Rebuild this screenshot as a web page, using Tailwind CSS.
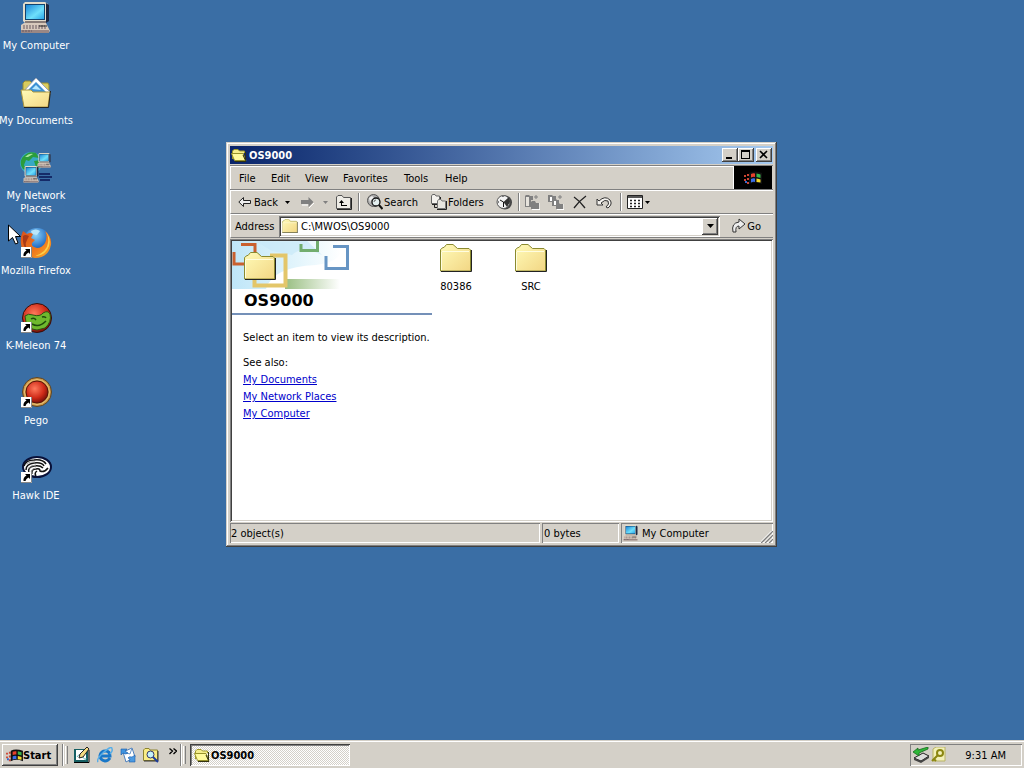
<!DOCTYPE html>
<html lang="en">
<head>
  <meta charset="UTF-8" />
  <meta name="viewport" content="width=device-width, initial-scale=1.0"/>
  <title>Desktop - OS9000</title>
  <script src="https://cdn.jsdelivr.net/npm/@tailwindcss/browser@4"></script>
</head>
<body class="bg-[#3a6ea5] h-screen flex flex-col relative overflow-hidden font-['DejaVu_Sans_Condensed','DejaVu_Sans',sans-serif] text-[11px] leading-[13px] text-black">

  <!-- SHARED ICONS -->
  <svg class="absolute size-0">
    <defs>
      <linearGradient id="screen" x1="0" y1="0" x2="1" y2="1">
        <stop offset="0" stop-color="#1c86d8"/><stop offset=".6" stop-color="#6fe0fb"/><stop offset="1" stop-color="#2aa5e8"/>
      </linearGradient>
      <linearGradient id="paper" x1="0" y1="0" x2="1" y2="1">
        <stop offset="0" stop-color="#fffbb8"/><stop offset="1" stop-color="#f2d684"/>
      </linearGradient>
      <linearGradient id="sky" x1="0" y1="0" x2="1" y2="0">
        <stop offset="0" stop-color="#bfe6f8"/><stop offset=".6" stop-color="#e3f5fc"/><stop offset="1" stop-color="#fff"/>
      </linearGradient>
      <linearGradient id="grass" x1="0" y1="0" x2="1" y2="0">
        <stop offset="0" stop-color="#7fae62"/><stop offset="1" stop-color="#fff"/>
      </linearGradient>
      <radialGradient id="redball" cx=".4" cy=".35" r=".7">
        <stop offset="0" stop-color="#ff7a5c"/><stop offset=".6" stop-color="#cf2a18"/><stop offset="1" stop-color="#6d0d08"/>
      </radialGradient>
      <radialGradient id="globe" cx=".45" cy=".25" r=".7">
        <stop offset="0" stop-color="#8fd4f8"/><stop offset=".6" stop-color="#2873c8"/><stop offset="1" stop-color="#123a80"/>
      </radialGradient>
      <linearGradient id="flame" x1="0" y1="0" x2="1" y2="1">
        <stop offset="0" stop-color="#d8501c"/><stop offset=".6" stop-color="#f07a1c"/><stop offset="1" stop-color="#f8b02c"/>
      </linearGradient>
      <symbol id="computer" viewBox="0 0 32 32">
        <path d="M3 2 5 0H25l3 2V19l-3 2H5L3 19Z" fill="#e3dccb"/>
        <path d="M26 1l3 2V19l-3 2Z" fill="#1d2740"/>
        <path d="M5 2H25V18H5Z" fill="#12436f"/>
        <path d="M6 3H24V17H6Z" fill="url(#screen)"/>
        <path d="M5 19H26V21H5Z" fill="#887c77"/>
        <path d="M1 23 4 21H26L30 29 28 31H1Z" fill="#d8cabc"/>
        <path d="M1 28H29V31H1Z" fill="#9a8784"/>
        <path d="M3 24H25M3 26H26M2 29H12" stroke="#685860" stroke-dasharray="2 1"/>
        <path d="M19 24H27" stroke="#222"/>
      </symbol>
      <symbol id="folder" viewBox="0 0 32 28">
        <path d="M.5 27V5.500L3 3.500H4L6.500.5H13L17.500 4.500H29L30.500 6V27Z" fill="url(#paper)" stroke="#8a8a30"/>
        <path d="M1.500 8V26M2 7.500H29" stroke="#fffde0" fill="none"/>
        <path d="M31.500 6V27.500H1" stroke="#222" fill="none"/>
      </symbol>
      <symbol id="open" viewBox="0 0 16 16">
        <path d="M1.500 12V4L3 2.500H7L8.500 4H13.500V6" fill="#f5ee8c" stroke="#a09a28"/>
        <path d="M.5 6.500H12L15 13.500H3.500Z" fill="#fffb9c" stroke="#96912a"/>
        <path d="M14.500 5V13.500L12 8M4 14.500H15" stroke="#333310" fill="none"/>
      </symbol>
      <symbol id="shortcut" viewBox="0 0 11 11">
        <path d="M0 0H11V11H0Z" fill="#fff"/>
        <path d="M10.500 0V10.500H0" stroke="#888" fill="none"/>
        <path d="M4 2H9V7L7.500 5.500Q5 6.500 4.500 9H2.500Q2 5 5.500 3.500Z" fill="#000"/>
      </symbol>
      <symbol id="flag" viewBox="0 0 18 16">
        <path d="M0 5h2v2H0ZM0 9h2v2H0ZM3 4h2v2H3ZM3 8h2v2H3ZM3 12h2v2H3Z" fill="#c43"/>
        <path d="M1 11h2v2H1Z" fill="#36c"/>
        <path d="M5 3Q10 0 18 3V14Q11 11 5 14Z" fill="#101010"/>
        <path d="M7 4Q9 3 11 3.500V7Q9 6.500 7 7.500Z" fill="#e8402c"/>
        <path d="M12.500 3.500Q15 4 16.500 4.500V8Q15 7.500 12.500 7Z" fill="#3ab54a"/>
        <path d="M7 9Q9 8 11 8.500V12Q9 11.500 7 12.500Z" fill="#3a6ee8"/>
        <path d="M12.500 8.500Q15 9 16.500 9.500V12.500Q15 12 12.500 12Z" fill="#f5d82c"/>
      </symbol>
    </defs>
  </svg>

  <!-- DESKTOP -->
  <main class="flex-1">
    <div class="w-[72px] flex flex-col text-white">
      <button class="h-[75px] pt-[2px] flex flex-col items-center gap-[5px]">
        <svg class="size-8 shrink-0"><use href="#computer"/></svg>
        <span class="whitespace-nowrap">My Computer</span>
      </button>
      <button class="h-[75px] pt-[2px] flex flex-col items-center gap-[5px]">
        <svg class="size-8 shrink-0" viewBox="0 0 32 32">
          <path d="M3 16V6L5 4H10L12 6H28L29 8V25H5Z" fill="#d9cc5e" stroke="#958b35"/>
          <path d="M16 1 31 16 22 24 3 15Z" fill="#fff" stroke="#98a5b8"/>
          <path d="M16 5 26 15 10 15 8 13Z" fill="#3d91d4"/>
          <path d="M12 12 16 8 21 13Z" fill="#b6e8ff"/>
          <path d="M1 13H11L13 15H30L28 30H4Z" fill="url(#paper)" stroke="#ab9640"/>
          <path d="M30.500 14 28.500 30.500H4" stroke="#222" fill="none"/>
        </svg>
        <span class="whitespace-nowrap">My Documents</span>
      </button>
      <button class="h-[75px] pt-[2px] flex flex-col items-center gap-[5px]">
        <svg class="size-8 shrink-0" viewBox="0 0 32 32">
          <circle cx="11" cy="11" r="11" fill="#37a9c4"/>
          <path d="M2 6Q8-2 16 1L19 6 13 5 9 9 6 8 4 13 6 18 3 17Q-1 12 2 6ZM14 9 20 8 22 12 17 18Z" fill="#2b9d3c"/>
          <path d="M5 5Q9 1 13 2L8 5Z" fill="#a9e6a0"/>
          <path d="M19 22H30M19 25H32M20 28H30" stroke="#152a68" stroke-width="2"/>
          <svg x="17" y="1" width="15" height="15"><use href="#computer"/></svg>
          <svg x="3" y="14" width="17" height="17"><use href="#computer"/></svg>
        </svg>
        <span>My Network Places</span>
      </button>
      <button class="h-[75px] pt-[2px] flex flex-col items-center gap-[5px]">
        <svg class="size-8 shrink-0" viewBox="0 0 32 32">
          <circle cx="17" cy="15" r="14" fill="url(#globe)"/>
          <path d="M11 4Q16 1 20 4L17 8 12 7Z" fill="#b9e6fa"/>
          <path d="M3 4 7 7Q10 5 13 7L11 11 15 13 12 16Q11 20 17 21 22 21 25 16 28 9 25 4 32 9 31 18 28 31 15 31 2 29 1 17 0 10 3 4Z" fill="url(#flame)"/>
          <path d="M26 5Q33 14 27 23 23 29 15 29 27 25 28 16 29 10 26 5Z" fill="#fbd04a"/>
          <path d="M3 9Q5 7 9 9L7 13Q4 18 8 24 2 20 3 9Z" fill="#a83a18"/>
          <svg x="1" y="20" width="11" height="11"><use href="#shortcut"/></svg>
        </svg>
        <span class="whitespace-nowrap">Mozilla Firefox</span>
      </button>
      <button class="h-[75px] pt-[2px] flex flex-col items-center gap-[5px]">
        <svg class="size-8 shrink-0" viewBox="0 0 32 32">
          <circle cx="17" cy="16" r="14.500" fill="url(#redball)" stroke="#35100c"/>
          <path d="M5 14Q8 11 13 13 20 15 23 11 28 8 30 12 32 20 25 26L17 28Q8 27 6 20Z" fill="#6fb92e" stroke="#2c5412"/>
          <path d="M11 17Q14 15 16 18M22 15Q25 14 26 16M12 22Q19 26 26 19" stroke="#1e4a0c" stroke-width="1.500" fill="none"/>
          <svg x="1" y="20" width="11" height="11"><use href="#shortcut"/></svg>
        </svg>
        <span class="whitespace-nowrap">K-Meleon 74</span>
      </button>
      <button class="h-[75px] pt-[2px] flex flex-col items-center gap-[5px]">
        <svg class="size-8 shrink-0" viewBox="0 0 32 32">
          <circle cx="17" cy="15" r="14.500" fill="#c99444" stroke="#5a4426"/>
          <circle cx="17" cy="15" r="12.500" fill="none" stroke="#e8c478"/>
          <circle cx="17" cy="15" r="11" fill="url(#redball)" stroke="#571409"/>
          <svg x="1" y="20" width="11" height="11"><use href="#shortcut"/></svg>
        </svg>
        <span>Pego</span>
      </button>
      <button class="h-[75px] pt-[2px] flex flex-col items-center gap-[5px]">
        <svg class="size-8 shrink-0" viewBox="0 0 32 32">
          <ellipse cx="17" cy="15" rx="14" ry="10" fill="#fff" stroke="#081038" stroke-width="2"/>
          <path d="M4 14Q6 8 14 8 23 7 26 12M6 18Q6 12 14 11 22 10 24 14M9 21Q7 15 14 14 20 13 23 16M12 22Q11 17 16 17 20 16 20 19 24 21 28 16M16 24Q14 21 17 19" fill="none" stroke="#111" stroke-width="1.500"/>
          <path d="M6 12Q10 9 15 10M8 17Q11 13 16 13M11 20Q12 16 16 16" stroke="#9a9a9a" fill="none"/>
          <svg x="1" y="20" width="11" height="11"><use href="#shortcut"/></svg>
        </svg>
        <span class="whitespace-nowrap">Hawk IDE</span>
      </button>
    </div>
  </main>

  <!-- MOUSE POINTER -->
  <svg class="absolute left-2 top-[224px] w-[13px] h-[21px]" viewBox="0 0 13 21">
    <path d="M.5 1V17L4.500 13.500 7.500 20 10 19 7.500 12.500H12.500Z" fill="#fff" stroke="#000"/>
  </svg>

  <!-- EXPLORER WINDOW -->
  <section class="absolute left-[226px] top-[142px] w-[551px] p-1 bg-[#d4d0c8] flex flex-col shadow-[inset_-1px_-1px_#404040,inset_1px_1px_#d4d0c8,inset_-2px_-2px_#808080,inset_2px_2px_#fff]">

    <!-- title bar -->
    <header class="h-[18px] px-px flex items-center bg-linear-to-r from-[#0a246a] to-[#a6caf0]">
      <svg class="size-4"><use href="#open"/></svg>
      <h1 class="flex-1 pl-[2px] font-bold text-white">OS9000</h1>
      <button aria-label="Minimize" class="w-4 h-[14px] bg-[#d4d0c8] shadow-[inset_-1px_-1px_#404040,inset_1px_1px_#fff,inset_-2px_-2px_#808080]">
        <svg class="w-4 h-[14px]" viewBox="0 0 16 14"><path d="M4 9H10V11H4Z"/></svg>
      </button>
      <button aria-label="Maximize" class="w-4 h-[14px] bg-[#d4d0c8] shadow-[inset_-1px_-1px_#404040,inset_1px_1px_#fff,inset_-2px_-2px_#808080]">
        <svg class="w-4 h-[14px]" viewBox="0 0 16 14"><path d="M3 2H12V11H3ZM4 4V10H11V4Z" fill-rule="evenodd"/></svg>
      </button>
      <button aria-label="Close" class="ml-[2px] w-4 h-[14px] bg-[#d4d0c8] shadow-[inset_-1px_-1px_#404040,inset_1px_1px_#fff,inset_-2px_-2px_#808080]">
        <svg class="w-4 h-[14px]" viewBox="0 0 16 14"><path d="M4 3 11 10M11 3 4 10" stroke="#000" stroke-width="1.600"/></svg>
      </button>
    </header>

    <!-- menu -->
    <div class="mt-px h-[25px] flex border-y border-t-[#808080] border-b-[#808080]">
      <nav class="flex-1 flex items-center pl-2 border-l border-t border-white">
        <button class="w-8 text-left">File</button>
        <button class="w-[34px] text-left">Edit</button>
        <button class="w-[38px] text-left">View</button>
        <button class="w-[61px] text-left">Favorites</button>
        <button class="w-[41px] text-left">Tools</button>
        <button class="text-left">Help</button>
      </nav>
      <div class="w-[39px] mr-px border-l border-white bg-black flex items-center justify-center">
        <svg class="w-[18px] h-4"><use href="#flag"/></svg>
      </div>
    </div>

    <!-- toolbar -->
    <div class="h-6 pl-[7px] flex items-center border-t border-l border-white border-b border-b-[#808080]">
      <button class="w-[46px] flex items-center gap-[3px]">
        <svg class="w-[13px] h-3 shrink-0" viewBox="0 0 13 12"><path d="M.8 6 5.500 1.500V4.500H12.500V7.500H5.500V10.500Z" fill="#eee" stroke="#222"/></svg>
        Back
      </button>
      <button aria-label="Back history" class="w-[17px] pl-px"><svg class="w-[5px] h-[3px]" viewBox="0 0 5 3"><path d="M0 0H5L2.500 3Z"/></svg></button>
      <button aria-label="Forward" class="w-[22px]"><svg class="w-[13px] h-3" viewBox="0 0 13 12"><path d="M12.500 6 7.500 1V4H0V8H7.500V11Z" fill="#808080"/><path d="M1 9H7M8 12 13 7" stroke="#fff"/></svg></button>
      <button aria-label="Forward history" class="w-[13px]"><svg class="w-[5px] h-[3px]" viewBox="0 0 5 3"><path d="M0 0H5L2.500 3Z" fill="#808080"/></svg></button>
      <button aria-label="Up" class="w-[22px]">
        <svg class="size-4" viewBox="0 0 16 16"><path d="M.5 14.500V3L2 1.500H6L7.500 3.500H14.500V14.500Z" fill="#eeece6" stroke="#555"/><path d="M15.500 4V15.500H1" stroke="#222" fill="none"/><path d="M5.500 6 8 9H6V11H11V12H5V9H3Z"/></svg>
      </button>
      <div class="w-[2px] h-[18px] mr-[7px] border-l border-[#808080] bg-white"></div>
      <button class="w-16 flex items-center gap-px">
        <svg class="size-4 shrink-0" viewBox="0 0 16 16"><circle cx="6.500" cy="6.500" r="6" fill="#aaa" stroke="#555"/><path d="M2 4 5 2 7 4 4 6 3 9Z" fill="#eee"/><circle cx="9" cy="8" r="4" fill="#e5f0f0" stroke="#111" stroke-width="1.300"/><path d="M12 11 15.500 15" stroke="#111" stroke-width="2"/><path d="M7 8Q7 6 9 6" stroke="#666" fill="none"/></svg>
        Search
      </button>
      <button class="w-[65px] flex items-center gap-px">
        <svg class="size-4 shrink-0" viewBox="0 0 16 16"><path d="M.5 9.500V2L1.500.5H4L5 2H8.500V9.500Z" fill="#f4f2ee" stroke="#666"/><path d="M9.500 3V10.500H1" stroke="#222" fill="none"/><path d="M6.500 14.500V7L7.500 5.500H10L11 7H14.500V14.500Z" fill="#e8e6e0" stroke="#777"/><path d="M15.500 7V15.500H6M3.500 11V13.500H6" stroke="#222" fill="none"/></svg>
        Folders
      </button>
      <button aria-label="History" class="w-[22px]">
        <svg class="size-4" viewBox="0 0 16 16"><circle cx="9" cy="8.500" r="7" fill="#444"/><circle cx="7.500" cy="8" r="6.500" fill="#f2f2f2" stroke="#555"/><path d="M7.500 8 13 3 14 8 11 13Z" fill="#333"/><path d="M7.500 8 4 6M7.500 8V13M7 2V3M2 8H3" stroke="#111"/></svg>
      </button>
      <div class="w-[2px] h-[18px] mr-1 border-l border-[#808080] bg-white"></div>
      <button aria-label="Move To" class="w-6">
        <svg class="size-4" viewBox="0 0 16 16"><path d="M1 13V2L2 1H5L6 2H9V6H7V13Z" fill="#808080"/><path d="M2 3H5V12H2Z" fill="#e6e3dc"/><path d="M7 15V8L8 7H11L12 9H15V15Z" fill="#808080"/><path d="M8 15.500H16V9" stroke="#fff" fill="none"/><path d="M10 3H14M12 1V5" stroke="#808080"/></svg>
      </button>
      <button aria-label="Copy To" class="w-6">
        <svg class="size-4" viewBox="0 0 16 16"><path d="M0 8V1H4L5 2H8V8ZM4 12V5H8L9 6H11V12Z" fill="#808080"/><path d="M2 3H4V7H2ZM6 7H8V11H6Z" fill="#fff"/><path d="M8 15V9H11L12 10H15V15Z" fill="#808080"/><path d="M9 15.500H16V10" stroke="#fff" fill="none"/><path d="M10 3H14M12 1V5" stroke="#808080"/></svg>
      </button>
      <button aria-label="Delete" class="w-6">
        <svg class="size-4" viewBox="0 0 16 16"><path d="M2 3Q8 7 13 14M14 2Q7 7 2 14" stroke="#222" stroke-width="1.300" fill="none"/></svg>
      </button>
      <button aria-label="Undo" class="w-6">
        <svg class="size-4" viewBox="0 0 16 16"><path d="M1 5V11H7L5 9Q9 5 12 7 14 10 10 13L12 14Q17 10 14 6 9 1 3 7Z" fill="#f4f2ee" stroke="#333"/></svg>
      </button>
      <div class="w-[2px] h-[18px] mr-[5px] border-l border-[#808080] bg-white"></div>
      <button aria-label="Views" class="flex items-center gap-[2px]">
        <svg class="size-4" viewBox="0 0 16 16"><path d="M.5 1.500H15.500V14.500H.5Z" fill="#fff" stroke="#222"/><path d="M1 3H15" stroke="#555" stroke-width="2"/><path d="M3 6.500H14M3 9.500H14M3 12.500H14" stroke="#222" stroke-width="1.500" stroke-dasharray="2 2"/></svg>
        <svg class="w-[5px] h-[3px]" viewBox="0 0 5 3"><path d="M0 0H5L2.500 3Z"/></svg>
      </button>
    </div>

    <!-- address -->
    <div class="h-6 pl-1 pr-3 flex items-center border-t border-l border-white border-b border-b-[#808080]">
      <label for="address" class="w-11">Address</label>
      <div class="flex-1 h-[21px] p-[2px] flex items-center bg-white shadow-[inset_1px_1px_#808080,inset_-1px_-1px_#fff,inset_2px_2px_#404040,inset_-2px_-2px_#d4d0c8]">
        <svg class="mx-px w-4 h-[14px]"><use href="#folder"/></svg>
        <input id="address" type="text" value="C:\MWOS\OS9000" class="flex-1 pl-[2px] outline-none">
        <button aria-label="Show addresses" class="w-4 h-[17px] flex items-center justify-center bg-[#d4d0c8] shadow-[inset_-1px_-1px_#404040,inset_1px_1px_#fff,inset_-2px_-2px_#808080]">
          <svg class="w-[7px] h-1" viewBox="0 0 7 4"><path d="M0 0H7L3.500 4Z"/></svg>
        </button>
      </div>
      <button class="ml-[11px] flex items-center">
        <svg class="size-4" viewBox="0 0 16 16"><path d="M2 14Q0 5 8 4V1L14 6 8 11V8Q4 8 5 14Z" fill="#eee" stroke="#333"/></svg>
        Go
      </button>
    </div>

    <!-- folder view -->
    <div class="mt-px min-h-[283px] p-[2px] flex bg-white shadow-[inset_1px_1px_#808080,inset_-1px_-1px_#fff,inset_2px_2px_#404040,inset_-2px_-2px_#d4d0c8]">
      <aside class="w-[200px]">
        <svg class="w-[120px] h-12" viewBox="0 0 120 48">
          <path d="M0 0H108Q116 20 84 24 40 26 34 48H0Z" fill="url(#sky)"/>
          <path d="M25 1 75 0 90 14Q70 4 60 14L40 10Z" fill="#c7e8f8" opacity=".7"/>
          <path d="M53 38H108V48H53Z" fill="url(#grass)" opacity=".8"/>
          <path d="M2 11V23H14M9 3.500H23V14" stroke="#c9602f" stroke-width="3" fill="none"/>
          <path d="M69 3V9.500H85.500V0" stroke="#72ad6e" stroke-width="3" fill="none"/>
          <path d="M94 15V27.500H115.500V5.500H101" stroke="#6795c4" stroke-width="3" fill="none"/>
          <path d="M38 14.500H53.500V44.500H22.500V38" stroke="#e3c66a" stroke-width="4" fill="none"/>
          <svg x="12" y="11" width="32" height="28"><use href="#folder"/></svg>
        </svg>
        <h2 class="h-6 pl-3 font-bold font-['DejaVu_Sans',sans-serif] text-[16px] leading-6">OS9000</h2>
        <div class="h-[2px] bg-[#7490b8]"></div>
        <div class="pl-[11px] pt-[14px] flex flex-col items-start leading-[17px]">
          <p class="mb-2 whitespace-nowrap">Select an item to view its description.</p>
          <p>See also:</p>
          <a href="#documents" class="text-[#0000cc] underline">My Documents</a>
          <a href="#network" class="text-[#0000cc] underline">My Network Places</a>
          <a href="#computer" class="text-[#0000cc] underline">My Computer</a>
        </div>
      </aside>
      <div class="flex-1 pt-[3px] flex items-start gap-[27px]">
        <button class="w-12 flex flex-col items-center gap-2">
          <svg class="w-8 h-7"><use href="#folder"/></svg>
          80386
        </button>
        <button class="w-12 flex flex-col items-center gap-2">
          <svg class="w-8 h-7"><use href="#folder"/></svg>
          SRC
        </button>
      </div>
    </div>

    <!-- status bar -->
    <footer class="mt-px h-5 flex gap-[2px]">
      <div class="flex-1 pl-px flex items-center shadow-[inset_1px_1px_#808080,inset_-1px_-1px_#fff]">2 object(s)</div>
      <div class="w-[77px] pl-[2px] flex items-center shadow-[inset_1px_1px_#808080,inset_-1px_-1px_#fff]">0 bytes</div>
      <div class="w-[152px] pl-[2px] flex items-center gap-[3px] shadow-[inset_1px_1px_#808080,inset_-1px_-1px_#fff]">
        <svg class="size-4"><use href="#computer"/></svg>
        <span class="flex-1">My Computer</span>
        <svg class="size-3 self-end" viewBox="0 0 12 12"><path d="M0 12 12 0M4 12 12 4M8 12 12 8" stroke="#808080" stroke-width="1.500"/><path d="M-1.500 12 12-1.500M2.500 12 12 2.500M6.500 12 12 6.500" stroke="#fff"/></svg>
      </div>
    </footer>
  </section>

  <!-- TASKBAR -->
  <footer class="h-7 pt-1 pb-[2px] px-[2px] flex items-stretch bg-[#d4d0c8] shadow-[inset_0_1px_#d4d0c8,inset_0_2px_#fff]">
    <button class="w-14 pl-1 flex items-center font-bold shadow-[inset_-1px_-1px_#404040,inset_1px_1px_#fff,inset_-2px_-2px_#808080]">
      <svg class="w-[17px] h-[15px] shrink-0"><use href="#flag"/></svg>
      Start
    </button>
    <div class="ml-1 w-[2px] border-l border-[#808080] bg-white"></div>
    <div class="ml-px my-[2px] w-[3px] border-l border-white border-r border-r-[#808080]"></div>
    <nav class="ml-[6px] flex items-center gap-[7px]">
      <button aria-label="Show Desktop">
        <svg class="size-4 block" viewBox="0 0 16 16"><path d="M0 2H14V15H0Z" fill="#155e62"/><path d="M2 3H12V13H2Z" fill="#fff"/><path d="M3 10Q6 5 9 10T12 11" fill="none" stroke="#62b8b8"/><path d="M5 11 6 7 13 0 15 2 9 10Z" fill="#f5db82" stroke="#222"/><path d="M0 15.500H15V3" stroke="#000" fill="none"/></svg>
      </button>
      <button aria-label="Internet Explorer">
        <svg class="size-4 block" viewBox="0 0 16 16"><path d="M13 11Q11 14 8 14 3 13 3 8.500 4 4 8.500 4 13 4 13 9H4" fill="none" stroke="#1977c8" stroke-width="3"/><path d="M1 15Q-1 12 7 5T15 2Q16 4 13 7" fill="none" stroke="#57aee8" stroke-width="1.500"/></svg>
      </button>
      <button aria-label="Outlook Express">
        <svg class="size-4 block" viewBox="0 0 16 16"><path d="M3 5 12 1 15 10 6 15Z" fill="#fff" stroke="#4d80bd"/><path d="M3 5 10 7 12 1" fill="none" stroke="#6d97c9"/><path d="M1 2V8L3 6Q6 8 8 6L5 4 7 2Z" fill="#3f94e0" stroke="#1c5aa8" stroke-width=".6"/><path d="M15 15V8L12 10Q9 9 8 11L10 12 9 15Z" fill="#4b9ae2" stroke="#1c5aa8" stroke-width=".6"/></svg>
      </button>
      <button aria-label="Find">
        <svg class="size-4 block" viewBox="0 0 16 16"><path d="M.5 13.500V3L2 1.500H6L7 3H14.500V13.500Z" fill="#f9ec85" stroke="#8d8330"/><path d="M15 4V14H1" stroke="#333" fill="none"/><circle cx="7.500" cy="7.500" r="3.500" fill="#c3f1f9" stroke="#336"/><path d="M10 10 15 15" stroke="#1c3d9c" stroke-width="2"/></svg>
      </button>
      <button aria-label="More" class="self-start pl-[3px] pt-1">
        <svg class="w-2 h-[7px] block" viewBox="0 0 8 7"><path d="M.5.5 3.500 3 .5 6M4.500.5 7.500 3 4.500 6" stroke="#000" stroke-width="1.300" fill="none"/></svg>
      </button>
    </nav>
    <div class="ml-[3px] w-[2px] border-l border-[#808080] bg-white"></div>
    <div class="ml-px my-[2px] w-[3px] border-l border-white border-r border-r-[#808080]"></div>
    <button class="ml-1 w-40 pl-1 flex items-center font-bold bg-[repeating-conic-gradient(#fff_0_25%,#d4d0c8_0_50%)] bg-[length:2px_2px] shadow-[inset_1px_1px_#404040,inset_-1px_-1px_#fff,inset_2px_2px_#808080]">
      <svg class="size-4 mr-px shrink-0"><use href="#open"/></svg>
      OS9000
    </button>
    <div class="ml-auto w-28 pl-[3px] flex items-center shadow-[inset_1px_1px_#808080,inset_-1px_-1px_#fff]">
      <svg class="w-[17px] h-4" viewBox="0 0 17 16"><path d="M1 11 10 6 16 9 8 14Z" fill="#ddd" stroke="#222"/><path d="M1 11V13L8 16 16 11V9L8 14Z" fill="#444"/><path d="M0 5 5 1V3L15 0V2L6 6V9Z" fill="#2fb83a" stroke="#146a1c" stroke-width=".8"/></svg>
      <svg class="size-4 ml-px" viewBox="0 0 16 16"><path d="M2 2 5 0H14V14H2Z" fill="#f2f0b8" stroke="#b8b264"/><circle cx="9" cy="6" r="3" fill="none" stroke="#8b8610" stroke-width="2"/><path d="M7 8 1 14M3 12 5 14" stroke="#8b8610" stroke-width="2"/></svg>
      <time class="flex-1 pr-4 text-right">9:31 AM</time>
    </div>
  </footer>
</body>
</html>
